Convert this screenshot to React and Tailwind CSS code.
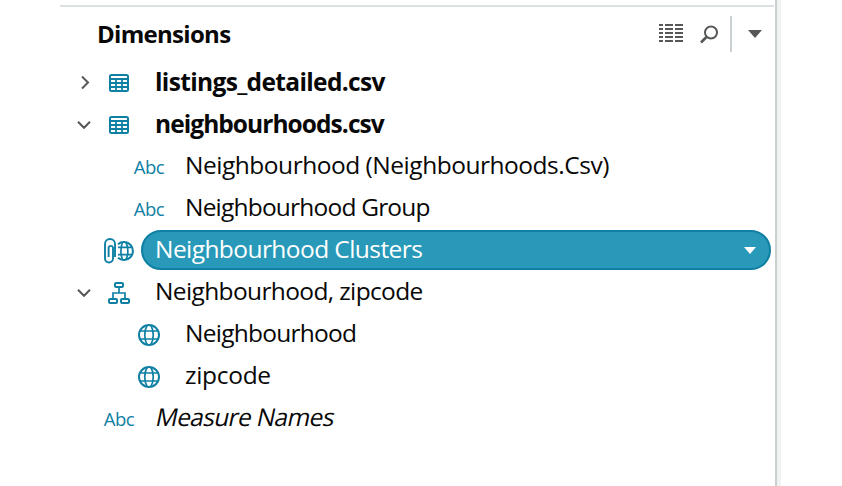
const TEAL = "#0f80a4";

function TableIcon() {
  return (
    <svg width="20" height="18" viewBox="0 0 20 18" fill="none" stroke={TEAL}>
      <rect x="1" y="1" width="18" height="16" rx="1.5" strokeWidth="2" />
      <path d="M1 5H19" strokeWidth="2" />
      <path d="M1 9H19M1 13H19M7 5V17M13 5V17" strokeWidth="1.8" />
    </svg>
  );
}

function GlobeIcon() {
  return (
    <svg width="22" height="22" viewBox="0 0 22 22" fill="none" stroke={TEAL}>
      <circle cx="11" cy="11" r="10" strokeWidth="2" />
      <path d="M2 7H20M2 15H20M9 1.5C6 7 6 15 9 20.5M13 1.5C16 7 16 15 13 20.5" strokeWidth="1.7" />
    </svg>
  );
}

function ClipGlobeIcon() {
  return (
    <svg width="30" height="26" viewBox="0 0 30 26" fill="none" stroke={TEAL}>
      <path d="M11 19V6A5 5 0 0 0 1 6V20.5A4 4 0 0 0 9 20.5V9.5A2.3 2.3 0 0 0 4.6 9.5V19" strokeWidth="1.9" />
      <path d="M14 6.2A9 9 0 1 1 14 19.8" strokeWidth="2" />
      <path d="M14 9.3H28M14 16.7H28M18.5 4.5C16.4 9 16.4 17 18.5 21.5M22 4.5C24.5 9 24.5 17 22 21.5" strokeWidth="1.7" />
    </svg>
  );
}

function HierarchyIcon() {
  return (
    <svg width="22" height="22" viewBox="0 0 22 22" fill="none" stroke={TEAL}>
      <g strokeWidth="2">
        <rect x="7" y="1" width="8" height="4" rx="1" />
        <rect x="1" y="17" width="8" height="4" rx="1" />
        <rect x="13" y="17" width="8" height="4" rx="1" />
      </g>
      <path d="M11 5V11M5 17V11H17V17" strokeWidth="1.7" />
    </svg>
  );
}

function Chevron({ open }) {
  return (
    <svg width="14" height="14" viewBox="0 0 14 14" fill="none" stroke="#555759" strokeWidth="2">
      <path d={open ? "M1 3.8L7 9.8L13 3.8" : "M5 0.5L11 6.5L5 12.5"} />
    </svg>
  );
}

function Abc() {
  return <span className="text-[18.5px] leading-none tracking-[-0.4px] text-[#0f80a4]">Abc</span>;
}

function Row({ chevron, icon, nested, children }) {
  return (
    <div className="flex h-[42px] items-center">
      <div className="flex w-[31px] justify-end">{chevron}</div>
      <div className={nested ? "ml-[36px] flex w-[44px] justify-center" : "ml-[6px] flex w-[44px] justify-center"}>
        {icon}
      </div>
      {children}
    </div>
  );
}

function Label({ className = "pb-[4px]", children }) {
  return (
    <span className={`ml-[14px] whitespace-nowrap text-[24.5px] leading-[30px] ${className}`}>{children}</span>
  );
}

export default function App() {
  return (
    <div className="h-[486px] w-[842px] overflow-hidden bg-white pl-[60px] font-['Open_Sans',sans-serif] text-[#080808]">
      <div className="h-full w-[721px] border-r-4 border-[#f1f3f3]">
        <div className="h-full border-r-2 border-[#c8d0d3]">
          <div className="h-[7px] w-[714px] border-b-2 border-[#dce2e4]" />
          <header className="flex h-[55px] items-center">
            <h1 className="ml-[37px] w-[562px] pb-[2px] text-[24px] leading-[30px] font-bold tracking-[-0.7px]">
              Dimensions
            </h1>
            <svg width="24" height="18" viewBox="0 0 24 18" className="mb-[3px]" stroke="#555759" strokeWidth="2">
              <path d="M0 1H4M6 1H14M16 1H24M0 5H4M6 5H14M16 5H24M0 9H4M6 9H14M16 9H24M0 13H4M6 13H14M16 13H24M0 17H4M6 17H14M16 17H24" />
            </svg>
            <svg width="18" height="19" viewBox="0 0 18 19" fill="none" className="mb-px ml-[17px]" stroke="#555759" strokeWidth="2">
              <circle cx="11" cy="7.5" r="6" />
              <path d="M6.5 12L1 17.5" strokeWidth="2.6" />
            </svg>
            <div className="mb-px ml-[12px] h-9 w-[2px] bg-[#c8d0d3]" />
            <svg width="14" height="8" viewBox="0 0 14 8" className="mb-px ml-4" fill="#555759">
              <path d="M0 0H14L7 8Z" />
            </svg>
          </header>
          <main>
            <Row chevron={<Chevron />} icon={<TableIcon />}>
              <Label className="pb-[2px] font-bold tracking-[-0.65px]">listings_detailed.csv</Label>
            </Row>
            <Row chevron={<Chevron open />} icon={<TableIcon />}>
              <Label className="pb-[2px] font-bold tracking-[-0.94px]">neighbourhoods.csv</Label>
            </Row>
            <Row nested icon={<Abc />}>
              <Label className="pb-[4px] tracking-[-0.48px]">Neighbourhood (Neighbourhoods.Csv)</Label>
            </Row>
            <Row nested icon={<Abc />}>
              <Label className="pb-[4px] tracking-[-0.8px]">Neighbourhood Group</Label>
            </Row>
            <Row icon={<ClipGlobeIcon />}>
              <div className="mb-[2px] flex h-10 w-[630px] items-center justify-between rounded-full border-2 border-[#0f80a4] bg-[#2899b8] pr-[13px] text-white">
                <span className="ml-[12px] pb-[2px] text-[24.5px] leading-[30px] tracking-[-0.57px]">
                  Neighbourhood Clusters
                </span>
                <svg width="12" height="7" viewBox="0 0 12 7" fill="white">
                  <path d="M0 0H12L6 7Z" />
                </svg>
              </div>
            </Row>
            <Row chevron={<Chevron open />} icon={<HierarchyIcon />}>
              <Label className="pb-[4px] tracking-[-0.63px]">Neighbourhood, zipcode</Label>
            </Row>
            <Row nested icon={<GlobeIcon />}>
              <Label className="pb-[4px] tracking-[-0.75px]">Neighbourhood</Label>
            </Row>
            <Row nested icon={<GlobeIcon />}>
              <Label className="pb-[4px] tracking-[-0.3px]">zipcode</Label>
            </Row>
            <Row icon={<Abc />}>
              <Label className="-skew-x-12 pb-[4px] pl-px tracking-[-0.65px]">Measure Names</Label>
            </Row>
          </main>
        </div>
      </div>
    </div>
  );
}
